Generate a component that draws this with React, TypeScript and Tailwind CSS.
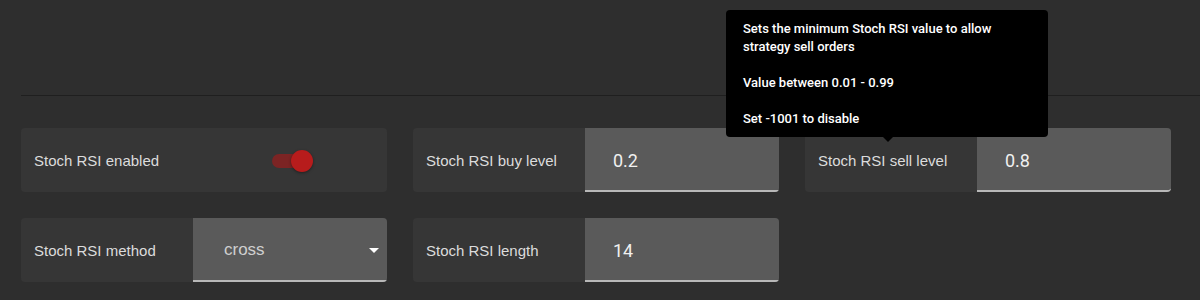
export default function App() {
  return (
    <div className="h-[300px] w-[1200px] overflow-hidden bg-[#2e2e2e] font-['Liberation_Sans',Arial,sans-serif]">
      <div className="ml-[21px] h-[96px] border-b border-[#1f1f1f]" />

      <div className="ml-[21px] mt-[32px] grid w-[1150px] grid-cols-[366px_366px_366px] gap-[26px]">
        {/* Stoch RSI enabled */}
        <div className="flex h-[64px] items-center rounded bg-[#363636] pl-[13px] pt-[2px]">
          <span className="w-[238px] text-[15px] text-[#dcdcdc]">Stoch RSI enabled</span>
          <div className="relative h-[14px] w-[38px]">
            <div className="absolute left-0 top-0 h-[14px] w-[36px] rounded-full bg-[#7c2424]" />
            <div className="absolute left-[19px] top-[-4px] h-[22px] w-[22px] rounded-full bg-[#b71c1c] shadow-[0_1px_3px_rgba(0,0,0,0.4)]" />
          </div>
        </div>

        {/* Stoch RSI buy level */}
        <div className="flex h-[64px] overflow-hidden rounded bg-[#363636]">
          <div className="flex w-[172px] items-center pl-[13px] pt-[3px] text-[15px] text-[#dcdcdc]">Stoch RSI buy level</div>
          <div className="flex flex-1 items-center border-b-2 border-[#b8b8b8] bg-[#5a5a5a] pl-[28px] pt-[2px] font-['Roboto',sans-serif] text-[18px] text-[#f0f0f0]">
            0.2
          </div>
        </div>

        {/* Stoch RSI sell level with tooltip */}
        <div className="relative flex h-[64px] rounded bg-[#363636]">
          <div className="flex w-[172px] items-center pl-[13px] pt-[3px] text-[15px] text-[#dcdcdc]">Stoch RSI sell level</div>
          <div className="flex flex-1 items-center rounded-r border-b-2 border-[#b8b8b8] bg-[#5a5a5a] pl-[28px] pt-[2px] font-['Roboto',sans-serif] text-[18px] text-[#f0f0f0]">
            0.8
          </div>

          <div className="absolute left-[-79px] top-[-118px] z-10 w-[322px] rounded bg-black px-[17px] pb-[9px] pt-[10px] font-['Roboto',sans-serif] text-[13px] font-medium leading-[18px] text-white">
            <p>
              Sets the minimum Stoch RSI value to allow
              <br />
              strategy sell orders
            </p>
            <p className="mt-[18px]">Value between 0.01 - 0.99</p>
            <p className="mt-[18px]">Set -1001 to disable</p>
            <div className="absolute bottom-[-5px] left-[156px] h-0 w-0 border-x-[6px] border-t-[6px] border-x-transparent border-t-black" />
          </div>
        </div>

        {/* Stoch RSI method */}
        <div className="flex h-[64px] overflow-hidden rounded bg-[#363636]">
          <div className="flex w-[172px] items-center pl-[13px] pt-[3px] text-[15px] text-[#dcdcdc]">Stoch RSI method</div>
          <div className="flex flex-1 items-center justify-between border-b-2 border-[#b8b8b8] bg-[#5a5a5a] pl-[31px] pr-[8px] pt-[2px] text-[17px] text-[#cfcfcf]">
            <span>cross</span>
            <svg width="10" height="5" viewBox="0 0 10 5">
              <path d="M0 0 L10 0 L5 5 Z" fill="#ffffff" />
            </svg>
          </div>
        </div>

        {/* Stoch RSI length */}
        <div className="flex h-[64px] overflow-hidden rounded bg-[#363636]">
          <div className="flex w-[172px] items-center pl-[13px] pt-[3px] text-[15px] text-[#dcdcdc]">Stoch RSI length</div>
          <div className="flex flex-1 items-center border-b-2 border-[#b8b8b8] bg-[#5a5a5a] pl-[28px] pt-[2px] font-['Roboto',sans-serif] text-[18px] text-[#f0f0f0]">
            14
          </div>
        </div>
      </div>
    </div>
  );
}
